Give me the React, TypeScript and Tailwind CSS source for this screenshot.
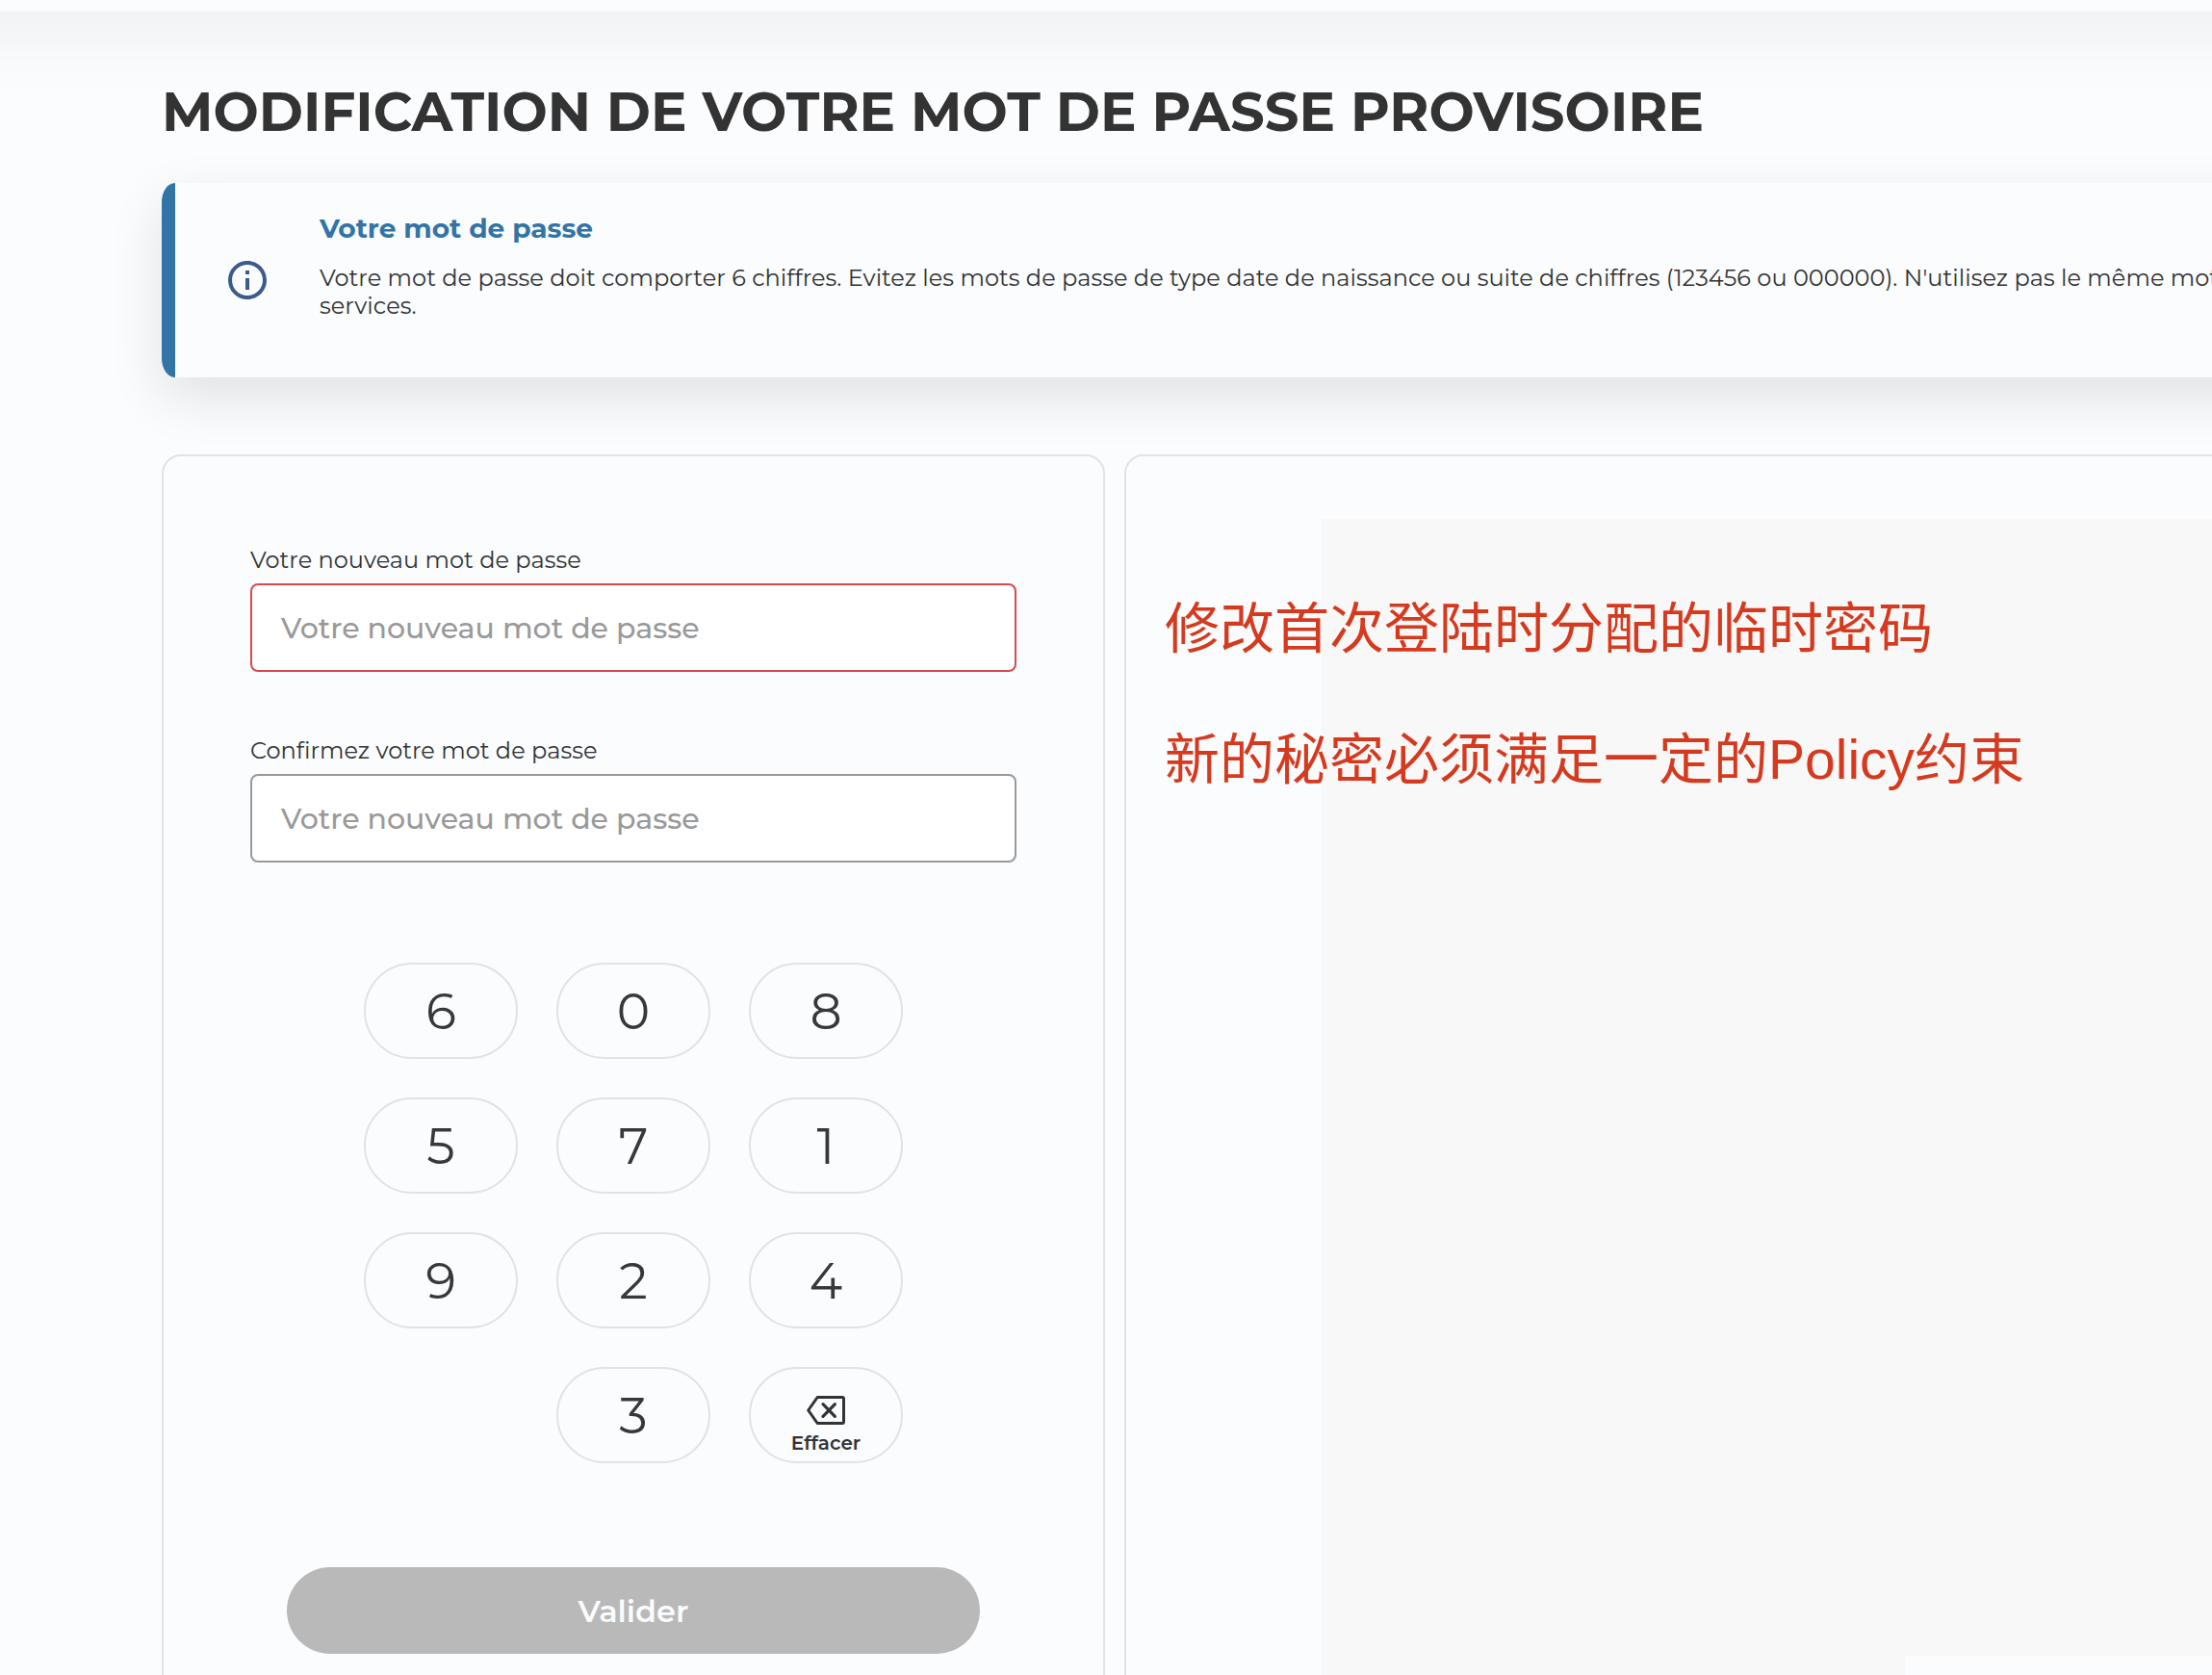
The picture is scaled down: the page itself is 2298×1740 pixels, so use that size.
import { MdInfoOutline } from "react-icons/md";

const keys = ["6", "0", "8", "5", "7", "1", "9", "2", "4", null, "3"];

const keyClass =
  "flex h-[100px] w-[160px] items-center justify-center rounded-[50px] border-2 border-[#e1e2e4] pt-0.5 text-[52px] leading-none text-[#383838]";

function DeleteIcon() {
  return (
    <svg
      width="40"
      height="30"
      viewBox="0 0 40 30"
      fill="none"
      stroke="#333333"
      strokeWidth="3"
      strokeLinejoin="round"
      strokeLinecap="round"
    >
      <path d="M11.2 1.5H37a1.5 1.5 0 0 1 1.5 1.5v24a1.5 1.5 0 0 1-1.5 1.5H11.2L1.7 15z" />
      <path d="M17 8.7 29.4 21.3M29.4 8.7 17 21.3" strokeWidth="3.2" />
    </svg>
  );
}

function Field({ label, invalid }: { label: string; invalid?: boolean }) {
  return (
    <label className="flex flex-col gap-[9px]">
      <span className="text-2xl leading-[30px] tracking-[0.03px]">{label}</span>
      <input
        type="password"
        placeholder="Votre nouveau mot de passe"
        className={`h-[92px] w-full rounded-lg border-2 bg-white px-[30px] text-[30px] font-medium placeholder:text-[#999999] ${
          invalid ? "border-[#d9494e]" : "border-[#999999]"
        }`}
      />
    </label>
  );
}

export default function App() {
  return (
    <div className="flex h-[1740px] w-full flex-col overflow-hidden bg-[#fafcfe] font-[Montserrat,sans-serif] text-[#333333]">
      <header className="-mx-[150px] -mt-[150px] h-[162px] shrink-0 bg-[#fafcfe] shadow-[0_20px_80px_rgba(0,0,0,0.055)]" />

      <main className="flex min-h-0 flex-1 flex-col pl-[168px]">
        <h1 className="mt-[70px] shrink-0 text-[56px] leading-[68px] font-bold tracking-[0.02px] whitespace-nowrap">
          MODIFICATION DE VOTRE MOT DE PASSE PROVISOIRE
        </h1>

        <section className="mt-10 flex h-[202px] w-[2300px] shrink-0 rounded-[14px/20px] border-l-14 border-[#3274a6] bg-[#fafcfe] shadow-[0_20px_56px_rgba(0,0,0,0.11)]">
          <MdInfoOutline className="mt-[77px] ml-[51px] size-12 shrink-0 text-[#3b5b8c]" />
          <div className="ml-[51px] pt-[30px] whitespace-nowrap">
            <h2 className="text-[28px] leading-[34px] font-bold text-[#3274a6]">Votre mot de passe</h2>
            <p className="mt-5 text-2xl leading-[29px] tracking-[0.038px]">
              Votre mot de passe doit comporter 6 chiffres. Evitez les mots de passe de type date de naissance ou suite de
              chiffres (123456 ou 000000). N'utilisez pas le même mot
              <br />
              services.
            </p>
          </div>
        </section>

        <div className="mt-20 flex h-[1400px] shrink-0 gap-5">
          <section className="w-[980px] shrink-0 rounded-[20px] border-2 border-[#e1e2e8] bg-[#fafcfe] px-[90px] pt-[93px]">
            <div className="flex flex-col gap-[67px]">
              <Field label="Votre nouveau mot de passe" invalid />
              <Field label="Confirmez votre mot de passe" />
            </div>

            <div className="mx-auto mt-[104px] grid w-[560px] grid-cols-3 gap-10">
              {keys.map((k, i) =>
                k ? (
                  <button key={i} className={keyClass}>
                    {k}
                  </button>
                ) : (
                  <span key={i} />
                ),
              )}
              <button className="flex h-[100px] w-[160px] flex-col items-center rounded-[50px] border-2 border-[#e1e2e4] pt-7">
                <DeleteIcon />
                <span className="mt-[7px] text-xl leading-6 font-semibold">Effacer</span>
              </button>
            </div>

            <button className="mx-auto mt-[108px] flex h-[90px] w-[720px] items-center justify-center rounded-[45px] bg-[#b9b9b9] pt-0.5 text-[32px] font-semibold text-[#fafcfe]">
              Valider
            </button>
          </section>

          <section className="relative w-[1300px] shrink-0 rounded-[20px] border-2 border-[#e1e2e8] bg-[#fafcfe] pt-[65px] pl-[203px]">
            <div className="flex h-[1201px] w-[925px] items-end justify-end bg-[#f8f8f8]">
              <div className="h-5 w-[319px] bg-[#fafcfe]" />
            </div>
            <div className="absolute top-[111px] left-10 font-['Liberation_Sans','Noto_Sans_CJK_SC',sans-serif] text-[57px] leading-[136px] whitespace-nowrap text-[#d63a1e]">
              <p>修改首次登陆时分配的临时密码</p>
              <p>新的秘密必须满足一定的Policy约束</p>
            </div>
          </section>
        </div>
      </main>
    </div>
  );
}
